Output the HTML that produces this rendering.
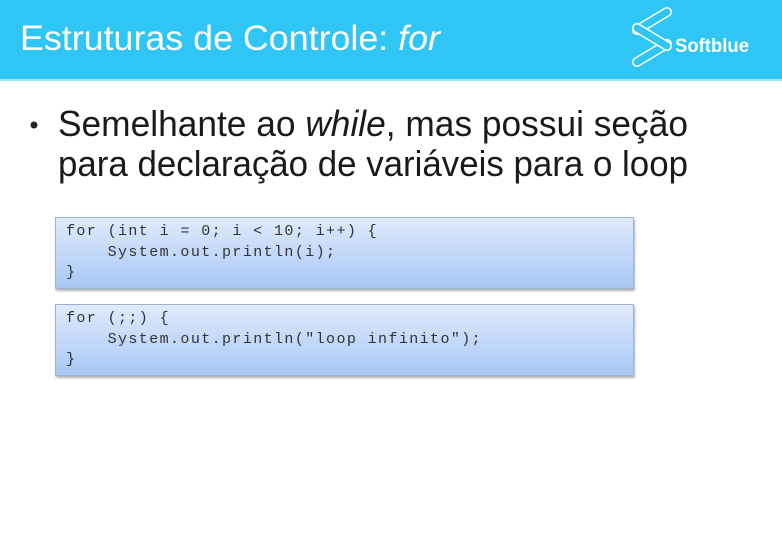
<!DOCTYPE html>
<html><head><meta charset="utf-8"><style>
body{margin:0;width:782px;height:552px;background:#fff;position:relative;overflow:hidden;font-family:"Liberation Sans",sans-serif}
.hdr{position:absolute;left:0;top:0;width:782px;height:79px;background:#2fc5f4;border-bottom:2px solid #9fe3fb}
.box{position:absolute;left:55px;width:577px;height:70px;border:1px solid #9db3d3;background:linear-gradient(#dfeafc,#a8c8f6);box-shadow:1px 2px 2px rgba(0,0,0,.3)}
.box pre{margin:0;position:absolute;left:10px;top:4px;font-family:"Liberation Mono",monospace;font-size:15px;letter-spacing:1.4px;line-height:20.5px;color:#333}
</style></head><body>
<div class="hdr"></div>
<svg width="782" height="200" style="position:absolute;left:0;top:0">
<text x="20" y="50" fill="#fff" font-size="35" font-family="Liberation Sans" textLength="420" lengthAdjust="spacingAndGlyphs">Estruturas de Controle: <tspan font-style="italic">for</tspan></text>
<g stroke-linecap="round">
<line x1="637" y1="30" x2="667" y2="12" stroke="#fff" stroke-width="10"/>
<line x1="637" y1="30" x2="667" y2="12" stroke="#2fc5f4" stroke-width="7"/>
<line x1="637" y1="62" x2="667" y2="44" stroke="#fff" stroke-width="10"/>
<line x1="637" y1="62" x2="667" y2="44" stroke="#2fc5f4" stroke-width="7"/>
<line x1="637" y1="28" x2="667" y2="46" stroke="#fff" stroke-width="10"/>
<line x1="637" y1="28" x2="667" y2="46" stroke="#2fc5f4" stroke-width="7"/>
</g>
<text x="675" y="52" fill="#fff" font-size="19" font-weight="bold" font-family="Liberation Sans" textLength="74" lengthAdjust="spacingAndGlyphs">Softblue</text>
<circle cx="34" cy="125" r="3.5" fill="#222"/>
<text x="58" y="136" fill="#1a1a1a" font-size="36" font-family="Liberation Sans" textLength="630" lengthAdjust="spacingAndGlyphs">Semelhante ao <tspan font-style="italic">while</tspan>, mas possui seção</text>
<text x="58" y="176" fill="#1a1a1a" font-size="36" font-family="Liberation Sans" textLength="630" lengthAdjust="spacingAndGlyphs">para declaração de variáveis para o loop</text>
</svg>
<div class="box" style="top:217px"><pre>for (int i = 0; i &lt; 10; i++) {
    System.out.println(i);
}</pre></div>
<div class="box" style="top:304px"><pre>for (;;) {
    System.out.println("loop infinito");
}</pre></div>
</body></html>
